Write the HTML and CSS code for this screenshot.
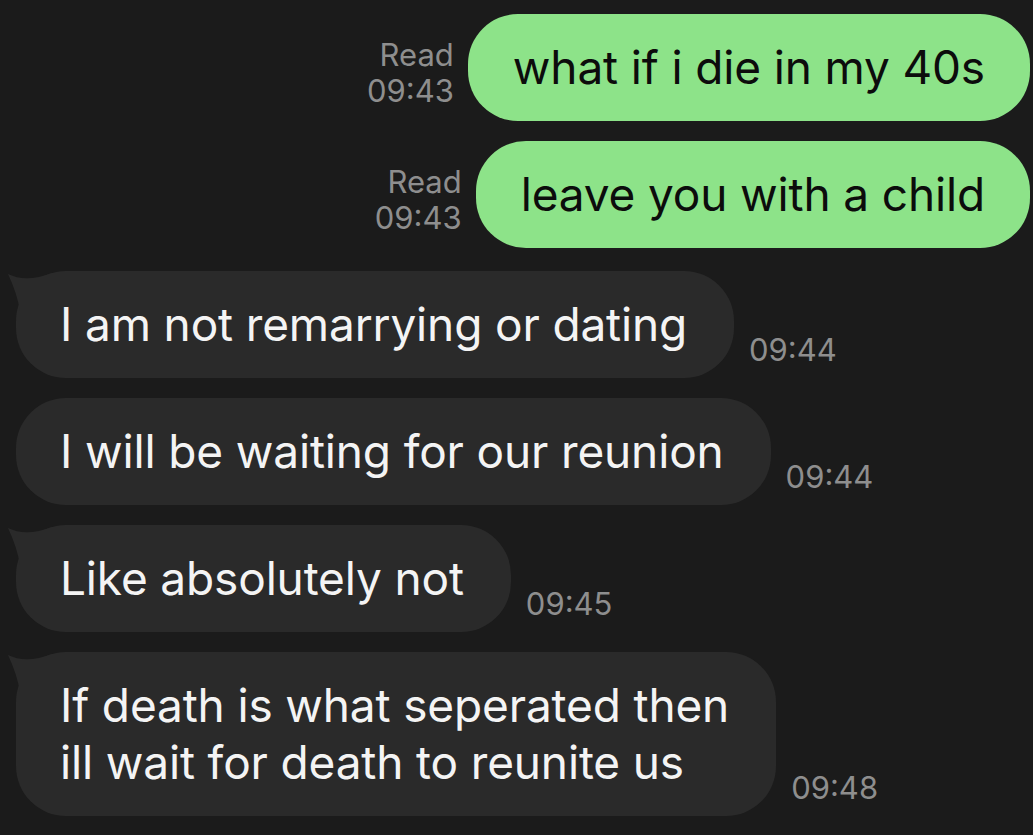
FILE: index.html
```html
<!DOCTYPE html>
<html lang="en">
<head>
    <meta charset="UTF-8">
    <meta name="viewport" content="width=device-width, initial-scale=1.0">
    <title>Messages</title>
<link rel="stylesheet" href="styles.css">
</head>
<body>
    <div class="chat">
        <div class="row out">
            <div class="meta"><span>Read</span><span>09:43</span></div>
            <div class="bubble">what if i die in my 40s</div>
        </div>
        <div class="row out">
            <div class="meta"><span>Read</span><span>09:43</span></div>
            <div class="bubble">leave you with a child</div>
        </div>

        <div class="row in">
            <div class="bubble tail">I am not remarrying or dating
                <svg class="tail-mark" viewBox="0 0 48 38"><path d="M0 1 Q18 10 44 0 L48 0 L48 38 L12 38 Q9 20 0 1 Z"/></svg>
            </div>
            <span class="time">09:44</span>
        </div>
        <div class="row in">
            <div class="bubble">I will be waiting for our reunion</div>
            <span class="time">09:44</span>
        </div>
        <div class="row in">
            <div class="bubble tail">Like absolutely not
                <svg class="tail-mark" viewBox="0 0 48 38"><path d="M0 1 Q18 10 44 0 L48 0 L48 38 L12 38 Q9 20 0 1 Z"/></svg>
            </div>
            <span class="time">09:45</span>
        </div>
        <div class="row in">
            <div class="bubble tail">If death is what seperated then<br>ill wait for death to reunite us
                <svg class="tail-mark" viewBox="0 0 48 38"><path d="M0 1 Q18 10 44 0 L48 0 L48 38 L12 38 Q9 20 0 1 Z"/></svg>
            </div>
            <span class="time">09:48</span>
        </div>
    </div>
</body>
</html>
```

FILE: styles.css
```css
body {
    margin: 0;
    background-color: #1b1b1b;
    font-family: Inter, "Noto Sans", sans-serif;
    height: 835px;
    overflow: hidden;
}
.chat {
    display: flex;
    flex-direction: column;
    padding: 14px 3px 0 16px;
}
.row {
    display: flex;
    align-items: flex-end;
}
.row.out {
    justify-content: flex-end;
    align-items: center;
    margin-bottom: 20px;
}
.row.out + .row.in {
    margin-top: 3px;
}
.row.in {
    margin-bottom: 20px;
}
.bubble {
    position: relative;
    font-size: 46px;
    line-height: 57px;
    padding: 25px 47px 25px 44px;
    border-radius: 50px;
    letter-spacing: -0.15px;
}
.out .bubble {
    background-color: #8de389;
    color: #0c0c0c;
    padding: 25px 45px;
}
.in .bubble {
    background-color: #2a2a2a;
    color: #f4f4f4;
}
.meta {
    display: flex;
    flex-direction: column;
    align-items: flex-end;
    font-size: 31px;
    line-height: 36px;
    color: #8e8e8e;
    margin-right: 14px;
    margin-top: 10px;
}
.time {
    font-size: 31px;
    line-height: 36px;
    color: #8e8e8e;
    margin-left: 15px;
    margin-bottom: 10px;
}
.tail-mark {
    position: absolute;
    left: -8px;
    top: 2px;
    width: 48px;
    height: 38px;
    fill: #2a2a2a;
}
```
